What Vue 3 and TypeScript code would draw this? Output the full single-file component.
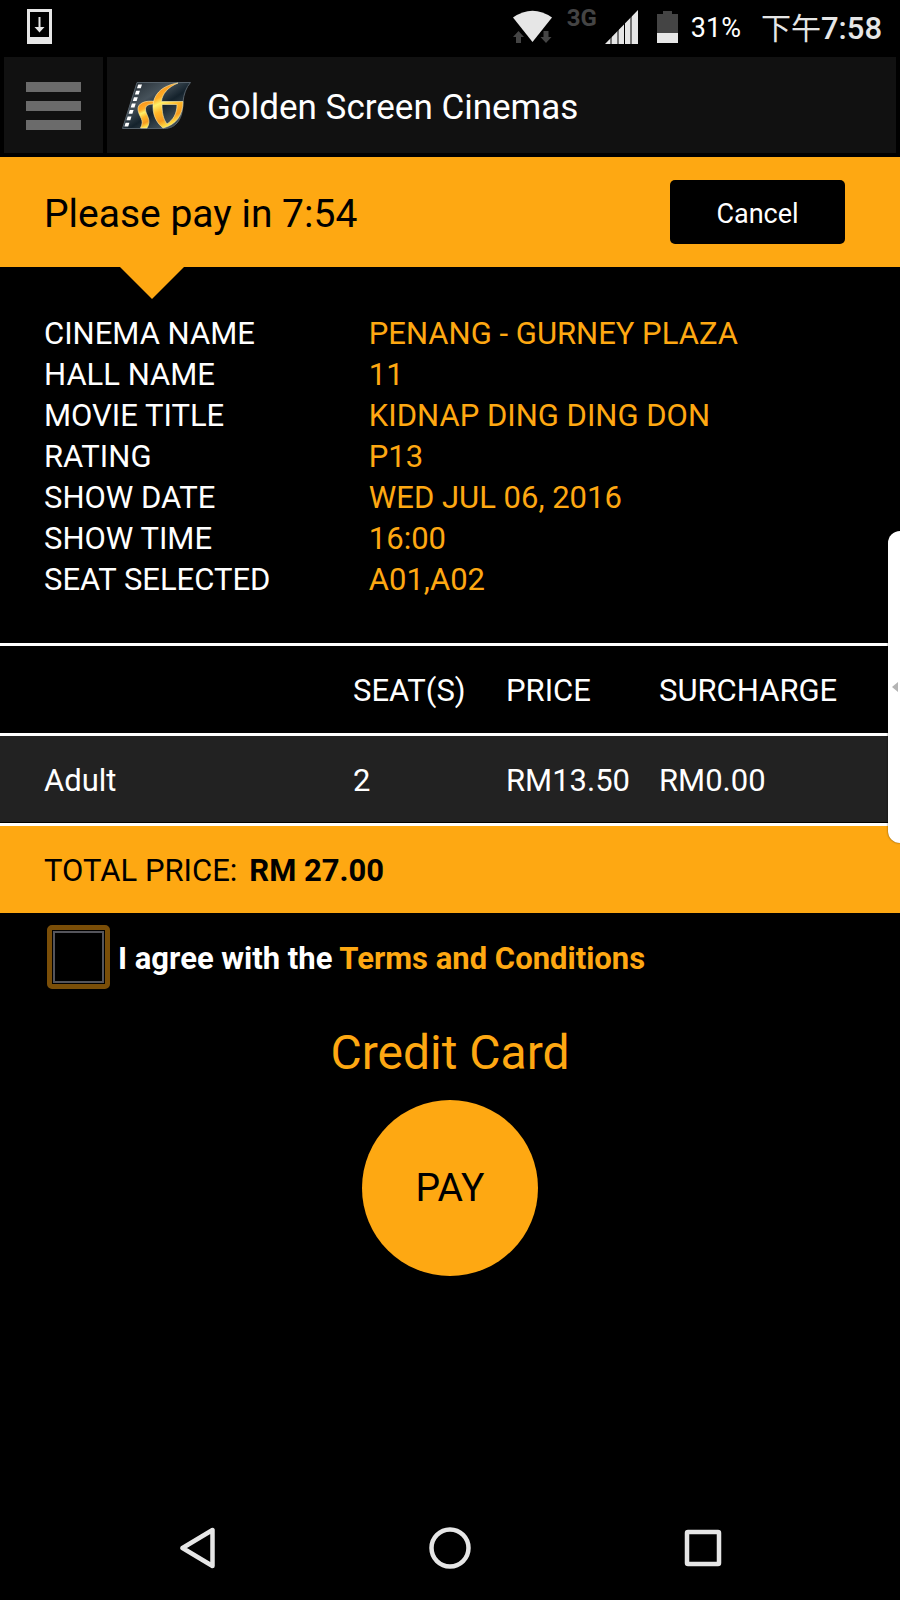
<script setup lang="ts">
import { ref } from 'vue'

interface Detail {
  label: string
  value: string
}

interface TicketLine {
  type: string
  seats: number
  price: string
  surcharge: string
}

const details: Detail[] = [
  { label: 'CINEMA NAME', value: 'PENANG - GURNEY PLAZA' },
  { label: 'HALL NAME', value: '11' },
  { label: 'MOVIE TITLE', value: 'KIDNAP DING DING DON' },
  { label: 'RATING', value: 'P13' },
  { label: 'SHOW DATE', value: 'WED JUL 06, 2016' },
  { label: 'SHOW TIME', value: '16:00' },
  { label: 'SEAT SELECTED', value: 'A01,A02' },
]

const tickets: TicketLine[] = [
  { type: 'Adult', seats: 2, price: 'RM13.50', surcharge: 'RM0.00' },
]

const sprockets = [0, 1, 2, 3, 4, 5, 6]
const agreed = ref(false)
</script>

<template>
  <div class="screen">
    <div class="status-bar">
      <svg class="download-icon" viewBox="0 0 25 35" aria-hidden="true">
        <path d="M0 0H25V35H0ZM3 3V28H22V3Z" fill="#e6e6e6" fill-rule="evenodd" />
        <path d="M11.500 8H13.500V18H17.500L12.500 23.500L7.500 18H11.500Z" fill="#e6e6e6" />
      </svg>
      <div class="status-right">
        <svg class="wifi-icon" viewBox="0 0 39 34" aria-hidden="true">
          <path d="M0 7.500Q19.500 -6 39 7.500L19.500 32Z" fill="#e6e6e6" />
          <path d="M5.500 21L11 27H8V33H3V27H0Z" fill="#444" />
          <path d="M33 33L27.500 27H30.500V21H35.500V27H38.500Z" fill="#444" />
        </svg>
        <span class="network">3G</span>
        <svg class="signal-icon" viewBox="0 0 33 34" aria-hidden="true">
          <path d="M0 34L33 0V34Z" fill="#e6e6e6" />
          <path d="M6 20V34M13 14V34M19.500 8V34M26 0V34" stroke="#000" stroke-width="1" />
        </svg>
        <svg class="battery-icon" viewBox="0 0 21 32" aria-hidden="true">
          <path d="M6 0H15V3H21V22H0V3H6Z" fill="#444" />
          <path d="M0 22H21V32H0Z" fill="#e6e6e6" />
        </svg>
        <span class="percent">31%</span>
        <span class="clock"><span class="meridiem">下午</span>7:58</span>
      </div>
    </div>

    <header class="app-bar">
      <button class="menu-button" type="button" aria-label="Menu">
        <span class="menu-line"></span>
        <span class="menu-line"></span>
        <span class="menu-line"></span>
      </button>
      <div class="brand">
        <svg class="logo" viewBox="0 0 69 47" aria-hidden="true">
          <defs>
            <linearGradient id="film" x1="0" y1="0" x2="1" y2="1">
              <stop offset="0" stop-color="#1b2329" />
              <stop offset="0.350" stop-color="#46525b" />
              <stop offset="0.550" stop-color="#14222c" />
              <stop offset="0.800" stop-color="#46535b" />
              <stop offset="1" stop-color="#17222a" />
            </linearGradient>
            <linearGradient id="gold" x1="0" y1="0" x2="0.300" y2="1">
              <stop offset="0" stop-color="#f58a1c" />
              <stop offset="0.350" stop-color="#ffab24" />
              <stop offset="0.480" stop-color="#fff06a" />
              <stop offset="0.650" stop-color="#ffb628" />
              <stop offset="0.850" stop-color="#f59a20" />
              <stop offset="1" stop-color="#ffe34a" />
            </linearGradient>
          </defs>
          <path d="M15 0.500H68.500Q62 8 61 20C61 36 55 46.500 42 46.500H0.500Z" fill="url(#film)" stroke="#56616a" />
          <path
            v-for="n in sprockets"
            :key="n"
            :d="`M${16.2 - n * 2.1} ${2.4 + n * 6.4}h3.800l-1.200 3.800h-3.800z`"
            fill="#fff"
          />
          <g fill="url(#gold)" stroke="#fff0b0" stroke-width="0.600">
            <path d="M33 19.500C24 18 15 21 16 28C17 35 23 38 18.500 46H25C30 38 24 33 23.500 28C23 23 27 22 33 22Z" />
            <path
              d="M56 1C42 3 31 11 31 25C31 35 36 42 41 46C54 43 61 33 61 19.500H39.500C40 12 46 5 56 1ZM40 22.500H55C55 32 51 38 45 42C41 37 40 30 40 22.500Z"
              fill-rule="evenodd"
            />
          </g>
        </svg>
        <h1 class="title">Golden Screen Cinemas</h1>
      </div>
    </header>

    <main class="content">
      <section class="countdown">
        <p class="countdown-text">Please pay in 7:54</p>
        <button class="cancel" type="button">Cancel</button>
      </section>

      <dl class="details">
        <div v-for="item in details" :key="item.label" class="detail-row">
          <dt>{{ item.label }}</dt>
          <dd>{{ item.value }}</dd>
        </div>
      </dl>

      <table class="tickets">
        <thead>
          <tr>
            <th class="type-col" scope="col" aria-label="Ticket type"></th>
            <th class="narrow-col" scope="col">SEAT(S)</th>
            <th class="narrow-col" scope="col">PRICE</th>
            <th scope="col">SURCHARGE</th>
          </tr>
        </thead>
        <tbody>
          <tr v-for="line in tickets" :key="line.type">
            <td class="type-col">{{ line.type }}</td>
            <td>{{ line.seats }}</td>
            <td>{{ line.price }}</td>
            <td>{{ line.surcharge }}</td>
          </tr>
        </tbody>
      </table>

      <p class="total"><span>TOTAL PRICE:</span><strong>RM 27.00</strong></p>

      <div class="agreement">
        <input id="agree" v-model="agreed" class="agree-box" type="checkbox" />
        <label for="agree">I agree with the <a href="#terms">Terms and Conditions</a></label>
      </div>

      <section class="payment">
        <h2 class="method">Credit Card</h2>
        <button class="pay" type="button">PAY</button>
      </section>
    </main>

    <nav class="nav-bar" aria-label="System">
      <button type="button" aria-label="Back">
        <svg viewBox="0 0 42 42" aria-hidden="true">
          <path d="M36.500 3V39L6.500 21Z" />
        </svg>
      </button>
      <button type="button" aria-label="Home">
        <svg viewBox="0 0 42 42" aria-hidden="true">
          <circle cx="21" cy="21" r="18.500" />
        </svg>
      </button>
      <button type="button" aria-label="Recent apps">
        <svg viewBox="0 0 42 42" aria-hidden="true">
          <rect x="5" y="5" width="32" height="32" rx="1" />
        </svg>
      </button>
    </nav>

    <button class="edge-handle" type="button" aria-label="Open side panel">
      <svg viewBox="0 0 6 10" aria-hidden="true">
        <path d="M6 0V10L0 5Z" fill="#b4b4b4" />
      </svg>
    </button>
  </div>
</template>

<style>
body {
  margin: 0;
  background: #000;
}
</style>

<style scoped>
.screen {
  --gold: #fea812;
  position: relative;
  display: flex;
  flex-direction: column;
  min-height: 100vh;
  overflow: hidden;
  background: #000;
  color: #fff;
  font-family: Roboto, "Noto Sans CJK TC", sans-serif;
  font-size: 31px;
  line-height: 41px;
}

button {
  border: 0;
  padding: 0;
  font-family: inherit;
  cursor: pointer;
}

.status-bar {
  display: flex;
  align-items: center;
  justify-content: space-between;
  height: 57px;
  box-sizing: border-box;
  padding: 0 18px 4px 27px;
  color: #e6e6e6;
}

.download-icon {
  width: 25px;
  height: 35px;
}

.status-right {
  display: flex;
  align-items: center;
}

.wifi-icon {
  width: 39px;
  height: 34px;
}

.network {
  align-self: flex-start;
  margin: 0 8px 0 15px;
  color: #444;
  font-size: 24px;
  font-weight: 700;
  line-height: 26px;
}

.signal-icon {
  width: 33px;
  height: 34px;
}

.battery-icon {
  width: 21px;
  height: 32px;
  margin: 0 13px 0 19px;
}

.percent {
  padding-top: 3px;
  color: #fff;
  font-size: 27px;
}

.clock {
  display: flex;
  margin-left: 20px;
  padding-top: 3px;
  font-size: 31px;
  font-weight: 500;
}

.meridiem {
  font-size: 30px;
  font-weight: 400;
}

.app-bar {
  display: flex;
  gap: 4px;
  padding: 0 4px 4px;
}

.menu-button {
  display: flex;
  flex-direction: column;
  align-items: center;
  justify-content: center;
  gap: 9px;
  width: 99px;
  height: 96px;
  padding-top: 2px;
  background: #111;
}

.menu-line {
  width: 55px;
  height: 10px;
  background: #6b6b6b;
}

.brand {
  display: flex;
  flex: 1;
  align-items: center;
  gap: 16px;
  padding-left: 15px;
  background: #111;
}

.logo {
  width: 69px;
  height: 47px;
}

.title {
  margin: 0;
  padding-top: 4px;
  font-size: 35px;
  font-weight: 400;
}

.countdown {
  position: relative;
  display: flex;
  align-items: center;
  justify-content: space-between;
  height: 110px;
  padding: 0 55px 0 44px;
  background: var(--gold);
}

.countdown::after {
  content: "";
  position: absolute;
  top: 100%;
  left: 120px;
  border: 32px solid transparent;
  border-top-color: var(--gold);
  border-bottom: 0;
}

.countdown-text {
  margin: 0;
  padding-top: 4px;
  color: #000;
  font-size: 39px;
}

.cancel {
  width: 175px;
  height: 64px;
  padding-top: 3px;
  border-radius: 5px;
  background: #000;
  color: #fff;
  font-size: 27px;
}

.details {
  margin: 0;
  padding: 46px 44px 43px;
}

.detail-row {
  display: grid;
  grid-template-columns: 40% 1fr;
}

.details dd {
  margin: 0;
  color: var(--gold);
}

.tickets {
  width: 100%;
  table-layout: fixed;
  border-collapse: separate;
  border-spacing: 0;
  border-bottom: 3px solid #fff;
  text-align: left;
}

.tickets th,
.tickets td {
  height: 90px;
  box-sizing: border-box;
  padding: 2px 0 0;
  border-top: 3px solid #fff;
  font-weight: 400;
}

.tickets td {
  border-bottom: 1px solid #000;
  background: #222;
}

.tickets .type-col {
  width: 353px;
  padding-left: 44px;
}

.tickets .narrow-col {
  width: 17%;
}

.total {
  display: flex;
  align-items: center;
  gap: 12px;
  height: 87px;
  box-sizing: border-box;
  margin: 0;
  padding: 2px 44px 0;
  background: var(--gold);
  color: #000;
}

.agreement {
  display: flex;
  align-items: center;
  gap: 8px;
  padding: 12px 44px 0 47px;
  font-weight: 700;
}

.agreement label {
  padding-top: 2px;
}

.agree-box {
  appearance: none;
  width: 63px;
  height: 64px;
  margin: 0;
  border: 5px solid #7a4e08;
  border-radius: 5px;
  outline: 2px solid #55555c;
  outline-offset: -8px;
  background: #000;
}

.agree-box:checked {
  background: radial-gradient(circle, var(--gold) 0 12px, #000 13px);
}

.agreement a {
  color: var(--gold);
  text-decoration: none;
}

.payment {
  display: flex;
  flex-direction: column;
  align-items: center;
  gap: 17px;
  padding-top: 34px;
}

.method {
  margin: 0;
  color: var(--gold);
  font-size: 48px;
  font-weight: 400;
  line-height: 60px;
}

.pay {
  width: 176px;
  height: 176px;
  border-radius: 50%;
  background: var(--gold);
  color: #000;
  font-size: 39px;
}

.nav-bar {
  display: flex;
  margin-top: auto;
  padding: 0 70px;
}

.nav-bar button {
  display: flex;
  flex: 1;
  align-items: center;
  justify-content: center;
  height: 104px;
  background: none;
}

.nav-bar svg {
  width: 42px;
  height: 42px;
  fill: none;
  stroke: #e6e6e6;
  stroke-width: 4.500px;
  stroke-linejoin: round;
}

.edge-handle {
  position: absolute;
  top: 531px;
  right: 0;
  display: flex;
  align-items: center;
  width: 12px;
  height: 312px;
  padding-left: 4px;
  border-radius: 12px 0 0 12px;
  background: #fff;
  box-shadow: 0 0 2px rgba(0, 0, 0, 0.6);
}

.edge-handle svg {
  width: 6px;
  height: 10px;
}
</style>
